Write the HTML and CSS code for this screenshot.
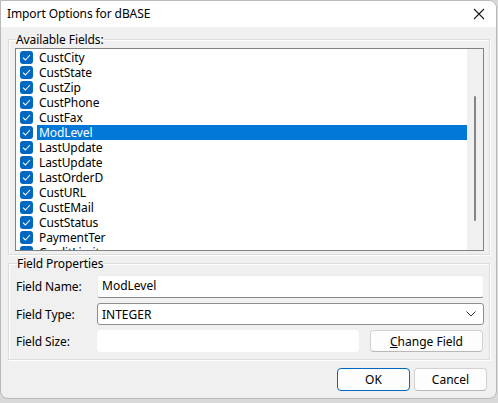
FILE: index.html
```html
<!DOCTYPE html>
<html lang="en">
<head>
    <meta charset="UTF-8">
    <title>Import Options for dBASE</title>
    <link rel="stylesheet" href="styles.css">
</head>
<body>
    <div class="dialog">
        <!-- Title bar -->
        <div class="titlebar">
            <span class="title">Import Options for dBASE</span>
            <svg class="close-icon" width="12" height="12" viewBox="0 0 12 12">
                <path d="M1 1 L11 11 M11 1 L1 11" stroke="#1a1a1a" stroke-width="1.1" fill="none"/>
            </svg>
        </div>

        <div class="dialog-body">
            <!-- Available fields -->
            <fieldset class="group fields-group">
                <legend>Available Fields:</legend>
                <div class="listbox">
                    <ul id="fieldList" class="field-list"></ul>
                    <div class="scrollbar"><div class="scroll-thumb"></div></div>
                </div>
            </fieldset>

            <!-- Field properties -->
            <fieldset class="group props-group">
                <legend>Field Properties</legend>
                <div class="prop-row">
                    <label class="prop-label">Field Name:</label>
                    <div class="text-input">ModLevel</div>
                </div>
                <div class="prop-row">
                    <label class="prop-label">Field Type:</label>
                    <div class="combo">
                        <span>INTEGER</span>
                        <svg width="10" height="6" viewBox="0 0 10 6">
                            <path d="M0.5 0.5 L5 5 L9.5 0.5" stroke="#333" stroke-width="1" fill="none"/>
                        </svg>
                    </div>
                </div>
                <div class="prop-row">
                    <label class="prop-label">Field Size:</label>
                    <div class="size-row">
                        <div class="text-input size-input"></div>
                        <button class="win-btn change-btn"><u>C</u>hange Field</button>
                    </div>
                </div>
            </fieldset>

            <div class="dialog-buttons">
                <button class="win-btn btn-default">OK</button>
                <button class="win-btn">Cancel</button>
            </div>
        </div>
    </div>

    <script>
    const fields = [
        'CustCity', 'CustState', 'CustZip', 'CustPhone', 'CustFax',
        'ModLevel', 'LastUpdate', 'LastUpdate', 'LastOrderD', 'CustURL',
        'CustEMail', 'CustStatus', 'PaymentTer', 'CreditLimit'
    ];
    const selected = 'ModLevel';

    const list = document.getElementById('fieldList');
    fields.forEach(name => {
        const item = document.createElement('li');
        item.className = 'field-item' + (name === selected ? ' is-selected' : '');
        item.innerHTML = `
            <span class="check">
                <svg width="9" height="7" viewBox="0 0 9 7"><path d="M1 3.6 L3.4 6 L8 1" stroke="#fff" stroke-width="1.1" fill="none"/></svg>
            </span>
            <span class="field-name">${name}</span>
        `;
        list.appendChild(item);
    });
    </script>
</body>
</html>
```

FILE: styles.css
```css
* {
    box-sizing: border-box;
    margin: 0;
    padding: 0;
}

body {
    font-family: "Noto Sans", "Open Sans", sans-serif;
    font-size: 12px;
    color: #000;
    background-color: #d9d9d9;
    width: 498px;
    height: 403px;
    overflow: hidden;
}

.dialog {
    width: 497px;
    height: 399px;
    background-color: #f0f0f0;
    border: 1px solid #b9b9b9;
    border-radius: 0 8px 8px 8px;
    overflow: hidden;
    display: flex;
    flex-direction: column;
}

.titlebar {
    height: 26px;
    background-color: #fff;
    display: flex;
    align-items: center;
    justify-content: space-between;
    padding: 0 11px 1px 6px;
}

.title {
    font-size: 12px;
    letter-spacing: -0.1px;
}

.dialog-body {
    padding: 0 6px 0 7px;
    display: flex;
    flex-direction: column;
}

.group {
    border: 1px solid #dcdcdc;
    box-shadow: 1px 1px 0 #fff, inset 1px 1px 0 #fff;
    padding: 0 5px 3px 6px;
}

.group legend {
    margin-left: 1px;
    padding: 0;
    line-height: 15px;
    letter-spacing: -0.1px;
}

.fields-group {
    margin-top: 5px;
    padding-top: 1px;
}

.listbox {
    height: 203px;
    background-color: #fff;
    border: 1px solid #828282;
    display: flex;
}

.field-list {
    list-style: none;
    flex: 1;
    overflow: hidden;
    padding-top: 1px;
}

.field-item {
    height: 15px;
    display: flex;
    align-items: center;
}

.check {
    width: 13px;
    height: 13px;
    margin-left: 4px;
    margin-right: 4px;
    border-radius: 3px;
    background-color: #0067c0;
    display: flex;
    align-items: center;
    justify-content: center;
}

.field-name {
    flex: 1;
    height: 15px;
    line-height: 15px;
    padding-left: 2px;
    letter-spacing: -0.1px;
}

.is-selected .field-name {
    background-color: #0078d7;
    color: #fff;
}

.scrollbar {
    width: 16px;
    background-color: #f0f0f0;
    padding: 47px 0 0 7px;
}

.scroll-thumb {
    width: 2px;
    height: 125px;
    border-radius: 1px;
    background-color: #858585;
}

.props-group {
    margin-top: 1px;
    padding: 4px 5px 7px 7px;
    display: flex;
    flex-direction: column;
    gap: 5px;
}

.prop-row {
    display: grid;
    grid-template-columns: 81px 1fr;
    align-items: center;
}

.prop-label {
    letter-spacing: -0.1px;
}

.text-input {
    height: 23px;
    background-color: #fff;
    border: 1px solid #ececec;
    border-bottom-color: #8a8a8a;
    border-radius: 3px;
    padding: 0 4px;
    line-height: 20px;
}

.combo {
    height: 22px;
    background-color: #fff;
    border: 1px solid #8d8d8d;
    border-radius: 3px;
    padding: 0 7px 0 4px;
    display: flex;
    align-items: center;
    justify-content: space-between;
}

.size-row {
    display: flex;
    gap: 11px;
    align-items: center;
}

.size-input {
    width: 262px;
    height: 22px;
    border-color: #fff;
}

.win-btn {
    font-family: inherit;
    font-size: 12px;
    color: #000;
    height: 22px;
    background-color: #fdfdfd;
    border: 1px solid #d2d2d2;
    border-bottom-color: #b8b8b8;
    border-radius: 4px;
}

.change-btn {
    width: 113px;
}

.dialog-buttons {
    display: flex;
    justify-content: flex-end;
    gap: 4px;
    margin-top: 8px;
    padding-right: 3px;
}

.dialog-buttons .win-btn {
    width: 73px;
    height: 23px;
}

.btn-default {
    border-color: #0067c0;
}
```
